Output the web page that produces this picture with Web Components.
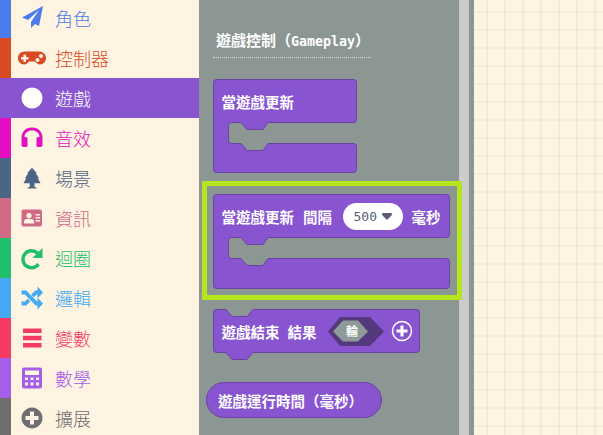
<!DOCTYPE html>
<html>
<head>
<meta charset="utf-8">
<style>
  html, body { margin: 0; height: 100%; overflow: hidden; background: #fff3e2; }
</style>
</head>
<body>
<game-editor>
  <tool-box slot="toolbox">
    <tool-cat color="#4b7bec" label="角色" h="38"><svg viewBox="0 0 40 40"><path d="M31 8 10 19.500l6 2.500 11-10-8 12v6l4-4 4 2z"/></svg></tool-cat>
    <tool-cat color="#d94a22" label="控制器"><svg viewBox="0 0 40 40"><path fill-rule="evenodd" d="M13 13.500h14c4.500 0 7 3 7 6.500s-2.500 6.500-6 6.500c-2.500 0-3.500-1.500-5-3h-6c-1.500 1.500-2.500 3-5 3-3.500 0-6-3-6-6.500s2.500-6.500 7-6.500zM11.500 16.500v2.500H9v2.500h2.500V24H14v-2.500h2.500V19H14v-2.500zM29 16a2 2 0 1 0 .01 0zM25.500 20a2 2 0 1 0 .01 0z"/></svg></tool-cat>
    <tool-cat color="#8854d0" label="遊戲" active><svg viewBox="0 0 40 40"><circle cx="20" cy="20" r="10.500"/></svg></tool-cat>
    <tool-cat color="#e30fc0" label="音效"><svg viewBox="0 0 40 40"><path d="M20 9.500C13 9.500 9.500 14.500 9.500 20v7a2 2 0 0 0 2 2h2.500a1.500 1.500 0 0 0 1.500-1.500v-7A1.500 1.500 0 0 0 14 19h-1.600c.3-4 3.300-6.500 7.600-6.500s7.300 2.500 7.600 6.500H26a1.500 1.500 0 0 0-1.500 1.500v7A1.500 1.500 0 0 0 26 29h2.500a2 2 0 0 0 2-2v-7c0-5.500-3.500-10.500-10.500-10.500z"/></svg></tool-cat>
    <tool-cat color="#4b6584" label="場景"><svg viewBox="0 0 40 40"><path d="M20 9.700 25 15.300H23.800L27 20.300H25.800L28.500 25.300H22.500V28.500L25 30.500H15L17.800 28.500V25.300H11.500L14.200 20.300H13L16.200 15.300H15Z"/></svg></tool-cat>
    <tool-cat color="#cf6a87" label="資訊"><svg viewBox="0 0 40 40"><path fill-rule="evenodd" d="M12 11.500h16a2 2 0 0 1 2 2v13a2 2 0 0 1-2 2H11.500a2 2 0 0 1-2-2v-13a2 2 0 0 1 2.500-2zM17 15a2.700 2.700 0 1 0 .01 0zM12 25.500h10v-2c0-1.500-1.500-2.500-2.500-2.500h-5c-1 0-2.500 1-2.500 2.500zM23.500 16v1.500H28V16zM23.500 19v1.500H28V19zM23.500 22v1.500H28V22z"/></svg></tool-cat>
    <tool-cat color="#20bf6b" label="迴圈"><svg viewBox="0 0 40 40"><path d="M30.500 10v10h-10l3.700-3.700a6.800 6.800 0 1 0 .9 8.800l2.800 2.200a10.300 10.300 0 1 1-1.200-13.500z"/></svg></tool-cat>
    <tool-cat color="#45aaf2" label="邏輯"><svg viewBox="0 0 40 40"><path d="M9.500 14.500h4l11 11h2M9.500 25.500h4l3.500-3.500M20.500 18l3.500-3.500h2.500" fill="none" stroke="currentColor" stroke-width="3.800"/><path d="M25.500 8.500 31 14.500 25.500 20.500zM25.500 19.500 31 25.500 25.500 31.500z"/></svg></tool-cat>
    <tool-cat color="#f53b62" label="變數"><svg viewBox="0 0 40 40"><path d="M11 10.500h18.500V15H11zM11 17.800h18.500v4.500H11zM11 25h18.500v4.500H11z"/></svg></tool-cat>
    <tool-cat color="#a55eea" label="數學"><svg viewBox="0 0 40 40"><path fill-rule="evenodd" d="M12 9.500h16a2 2 0 0 1 2 2v17a2 2 0 0 1-2 2H12a2 2 0 0 1-2-2v-17a2 2 0 0 1 2-2zM13 12.500v4.500h14v-4.500zM13 19.500v2.500h3v-2.500zM18.500 19.500v2.500h3v-2.500zM24 19.500v2.500h3v-2.500zM13 24.500v3h3v-3zM18.500 24.500v3h3v-3zM24 24.500v3h3v-3z"/></svg></tool-cat>
    <tool-cat color="#6f6f6f" label="擴展"><svg viewBox="0 0 40 40"><path fill-rule="evenodd" d="M20 9.500a10.500 10.500 0 1 0 .01 0zM18 13.500h4v4.500h4.500v4H22v4.500h-4V22h-4.500v-4H18z"/></svg></tool-cat>
  </tool-box>

  <block-flyout slot="flyout">
    <flyout-heading>遊戲控制（<b>Gameplay</b>）</flyout-heading>

    <game-block kind="loop" w="144" h="94" style="margin-top:21px">當遊戲更新</game-block>

    <block-highlight style="margin-top:8px">
      <game-block kind="loop" w="237" h="95">
        當遊戲更新<span style="margin-left:9px">間隔</span>
        <drop-pill style="margin:-1px 9px 0 10.500px">500</drop-pill>毫秒
      </game-block>
    </block-highlight>

    <game-block kind="stack" w="207" h="44" style="margin-top:9px">
      遊戲結束<span style="margin-left:8px">結果</span>
      <svg width="56" height="29" viewBox="0 0 56 29" style="margin:-1px 0 0 11px;flex:none">
        <path d="M0 14.500 12 0h30l14 14.500L42 29H12z" fill="#55397f"/>
        <path d="M5 14.500 15 3.500h15L40 14.500 30 24.500H15z" fill="#8f9b98"/>
        <text x="24" y="19" text-anchor="middle" font-size="12" font-weight="700" fill="#fff" font-family="'Noto Sans CJK TC',sans-serif">輸</text>
      </svg>
      <svg width="22" height="22" viewBox="0 0 22 22" style="margin:-1px 0 0 7px;flex:none">
        <circle cx="11" cy="11" r="9.500" fill="none" stroke="#fff" stroke-width="1.500"/>
        <path d="M9.500 5.500h3v4h4v3h-4v4h-3v-4h-4v-3h4z" fill="#fff"/>
      </svg>
    </game-block>

    <game-block kind="pill" w="176" h="36" style="margin:29px 0 0 -7px">遊戲運行時間（毫秒）</game-block>
  </block-flyout>

  <work-space slot="workspace"></work-space>
</game-editor>

<script>
  const CJK = "'Noto Sans CJK TC', sans-serif";

  class GameEditor extends HTMLElement {
    constructor() {
      super();
      const shadow = this.attachShadow({ mode: 'open' });
      shadow.innerHTML = `
        <style>
          :host { display: flex; width: 603px; height: 435px; overflow: hidden; background: #fff3e2; }
          .scroll { flex: none; width: 10px; background: #cccccc; }
          .gap { flex: none; width: 5px; background: #8c9794; }
        </style>
        <slot name="toolbox"></slot>
        <slot name="flyout"></slot>
        <div class="scroll"></div>
        <div class="gap"></div>
        <slot name="workspace"></slot>
      `;
    }
  }

  class ToolBox extends HTMLElement {
    constructor() {
      super();
      const shadow = this.attachShadow({ mode: 'open' });
      shadow.innerHTML = `
        <style>
          :host { display: flex; flex-direction: column; flex: none; width: 199px; height: 435px; background: #fff3e2; }
        </style>
        <slot></slot>
      `;
    }
  }

  class ToolCat extends HTMLElement {
    constructor() {
      super();
      const shadow = this.attachShadow({ mode: 'open' });
      const color = this.getAttribute('color');
      const active = this.hasAttribute('active');
      const h = this.getAttribute('h') || 40;
      const lift = h == 38 ? -2 : 0;
      shadow.innerHTML = `
        <style>
          :host {
            display: flex; align-items: center; flex: none; height: ${h}px;
            background: ${active ? color : 'transparent'};
            color: ${active ? '#fff' : color};
            font: 300 18px ${CJK};
          }
          .bar { flex: none; width: 11px; align-self: stretch; background: ${color}; }
          .icon { flex: none; width: 41px; height: 40px; display: flex; justify-content: center; margin-top: ${lift}px; }
          ::slotted(svg) { width: 40px; height: 40px; fill: currentColor; }
          .label { margin-left: 3px; margin-top: ${lift - 1}px; }
        </style>
        <div class="bar"></div>
        <div class="icon"><slot></slot></div>
        <div class="label">${this.getAttribute('label')}</div>
      `;
    }
  }

  class BlockFlyout extends HTMLElement {
    constructor() {
      super();
      const shadow = this.attachShadow({ mode: 'open' });
      shadow.innerHTML = `
        <style>
          :host {
            display: flex; flex-direction: column; align-items: flex-start; flex: none;
            width: 260px; height: 435px; padding-left: 14px; box-sizing: border-box;
            background: #8c9794;
          }
        </style>
        <slot></slot>
      `;
    }
  }

  class FlyoutHeading extends HTMLElement {
    constructor() {
      super();
      const shadow = this.attachShadow({ mode: 'open' });
      shadow.innerHTML = `
        <style>
          :host {
            display: block; box-sizing: border-box; width: 158px; height: 58px;
            padding: 30px 0 0 3px; border-bottom: 1px dotted #d9dedc;
            color: #fff; font: 700 15px ${CJK}; white-space: nowrap; line-height: 20px;
          }
          ::slotted(b) { font-family: 'DejaVu Sans Mono', monospace; font-size: 13.300px; }
        </style>
        <slot></slot>
      `;
    }
  }

  function blockPath(kind, w, h) {
    const r = 3, x = w - 0.5, y = h - 0.5;
    const top = `M.5 ${r + .5}a${r} ${r} 0 0 1 ${r}-${r}`;
    const right = `H${x - r}a${r} ${r} 0 0 1 ${r} ${r}`;
    const close = `a${r} ${r} 0 0 1-${r}-${r}Z`;
    if (kind == 'pill') {
      const q = h / 2 - .5;
      return `M${q + .5} .5H${w - q - .5}a${q} ${q} 0 0 1 0 ${q * 2}H${q + .5}a${q} ${q} 0 0 1 0-${q * 2}Z`;
    }
    if (kind == 'stack') {
      return `${top}H13l6 7h15l6-7${right}V${y - r}a${r} ${r} 0 0 1-${r} ${r}H40l-6 7H19l-6-7H${r + .5}${close}`;
    }
    // C shaped loop block: the arm ends at 43.5, the foot starts at 64.5
    return `${top}${right}V40.5a${r} ${r} 0 0 1-${r} ${r}H55l-5 7H34l-6-7H18.500a3 3 0 0 0-3 3V61.500a3 3 0 0 0 3 3H28l6 7h16l5-7H${x - r}a${r} ${r} 0 0 1 ${r} ${r}V${y - r}a${r} ${r} 0 0 1-${r} ${r}H${r + .5}${close}`;
  }

  class GameBlock extends HTMLElement {
    constructor() {
      super();
      const shadow = this.attachShadow({ mode: 'open' });
      const kind = this.getAttribute('kind');
      const w = +this.getAttribute('w');
      const h = +this.getAttribute('h');
      const rowH = kind == 'loop' ? 44 : h;
      shadow.innerHTML = `
        <style>
          :host {
            display: block; position: relative; flex: none; width: ${w}px; height: ${h}px;
            color: #fff; font: 700 14.500px ${CJK}; white-space: nowrap;
          }
          svg { position: absolute; left: 0; top: 0; overflow: visible; }
          .row {
            position: relative; display: flex; align-items: center; box-sizing: border-box;
            height: ${rowH}px; padding-top: 1px; padding-left: ${kind == 'pill' ? 12 : 8.5}px;
          }
        </style>
        <svg width="${w}" height="${h}"><path d="${blockPath(kind, w, h)}" fill="#8854d0" stroke="#6a41a5"/></svg>
        <div class="row"><slot></slot></div>
      `;
    }
  }

  class BlockHighlight extends HTMLElement {
    constructor() {
      super();
      const shadow = this.attachShadow({ mode: 'open' });
      shadow.innerHTML = `
        <style>
          :host {
            display: block; box-sizing: border-box; flex: none; width: 260px; height: 119px;
            margin-left: -11px; padding: 8px 0 0 6px; border: 5px solid #b5e61d;
            position: relative;
          }
        </style>
        <slot></slot>
      `;
    }
  }

  class DropPill extends HTMLElement {
    constructor() {
      super();
      const shadow = this.attachShadow({ mode: 'open' });
      shadow.innerHTML = `
        <style>
          :host {
            display: flex; align-items: center; flex: none; box-sizing: border-box;
            width: 60px; height: 27px; padding-left: 11px; border-radius: 14px;
            background: #fff; color: #575e75; font: 400 13px 'DejaVu Sans Mono', monospace;
          }
          svg { margin-left: 5px; }
        </style>
        <slot></slot>
        <svg width="10" height="7" viewBox="0 0 10 7"><path d="M0 1 Q0 0 1 0H9Q10 0 10 1Q10 2 9 3L6 6Q5 7 4 6L1 3Q0 2 0 1Z" fill="#575e75"/></svg>
      `;
    }
  }

  class WorkSpace extends HTMLElement {
    constructor() {
      super();
      const shadow = this.attachShadow({ mode: 'open' });
      shadow.innerHTML = `
        <style>
          :host {
            display: block; flex: 1; height: 435px;
            background-color: #fff3e2;
            background-image:
              linear-gradient(90deg, rgba(0,0,0,.04) 2px, transparent 2px),
              linear-gradient(rgba(0,0,0,.03) 2px, transparent 2px);
            background-size: 18px 18px;
            background-position: 12px 11px;
          }
        </style>
      `;
    }
  }

  customElements.define('game-editor', GameEditor);
  customElements.define('tool-box', ToolBox);
  customElements.define('tool-cat', ToolCat);
  customElements.define('block-flyout', BlockFlyout);
  customElements.define('flyout-heading', FlyoutHeading);
  customElements.define('game-block', GameBlock);
  customElements.define('block-highlight', BlockHighlight);
  customElements.define('drop-pill', DropPill);
  customElements.define('work-space', WorkSpace);
</script>
</body>
</html>
